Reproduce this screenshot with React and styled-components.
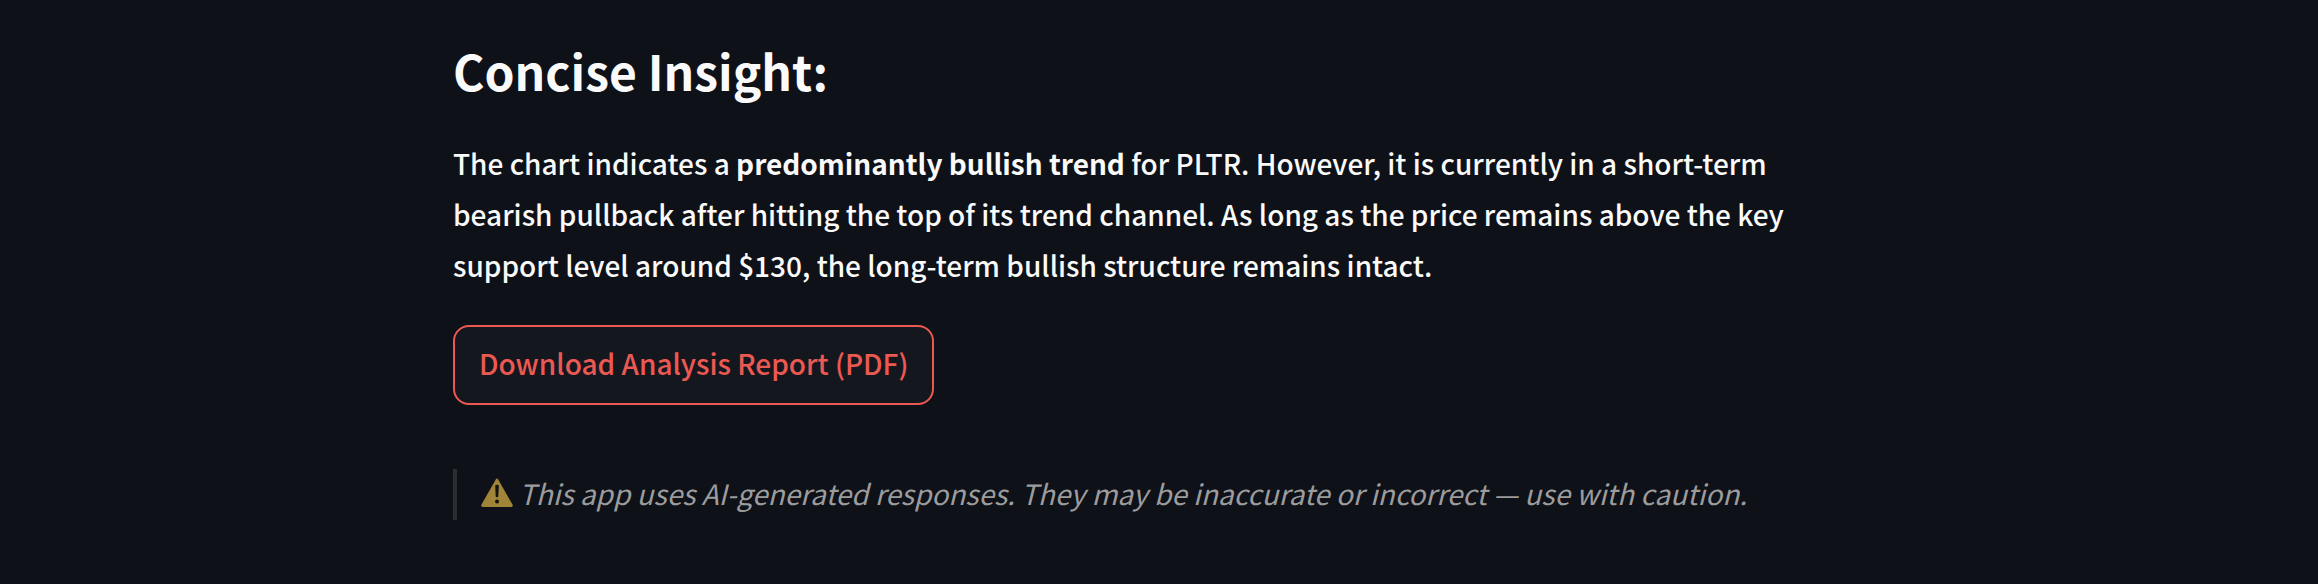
import React from "react";
import styled, { createGlobalStyle } from "styled-components";

const GlobalStyle = createGlobalStyle`
  *, *::before, *::after { box-sizing: border-box; }
  body {
    margin: 0;
    background: #0e1118;
    color: #fafafa;
    font-family: "Noto Sans CJK SC", "Noto Sans", sans-serif;
    font-size: 28px;
    font-weight: 500;
    line-height: 51px;
  }
`;

const Page = styled.main`
  display: flex;
  flex-direction: column;
  align-items: flex-start;
  max-width: 1460px;
  margin: 0 auto;
  padding: 36px 24px 64px;
`;

const Heading = styled.h3`
  margin: 0;
  font-size: 48px;
  line-height: 68px;
  font-weight: 700;
`;

const Paragraph = styled.p`
  margin: 34px 0;
`;

const DownloadButton = styled.button`
  padding: 10px 24px 14px;
  border: 2px solid #ec5952;
  border-radius: 16px;
  background: #15171f;
  color: #ec5952;
  font: inherit;
  line-height: 52px;
  cursor: pointer;
`;

const Notice = styled.blockquote`
  display: flex;
  align-items: center;
  gap: 6px;
  margin: 64px 0 0;
  padding: 0 0 3px 24px;
  border-left: 4px solid #2c2d32;
  color: #9c9c9d;
  font-style: italic;
  font-weight: 400;
  line-height: 48px;
`;

const WarningIcon = styled.svg`
  flex: none;
  width: 32px;
  height: 32px;
`;

export default function App() {
  return (
    <>
      <GlobalStyle />
      <Page>
        <Heading>Concise Insight:</Heading>
        <Paragraph>
          The chart indicates a <strong>predominantly bullish trend</strong> for
          PLTR. However, it is currently in a short-term bearish pullback after
          hitting the top of its trend channel. As long as the price remains
          above the key support level around $130, the long-term bullish
          structure remains intact.
        </Paragraph>
        <DownloadButton type="button">Download Analysis Report (PDF)</DownloadButton>
        <Notice>
          <WarningIcon viewBox="0 0 32 32" role="img" aria-label="Warning">
            <path
              d="M14.8 2.4Q16 0.8 17.2 2.4L31.5 27.6Q32.3 30 30 30H2Q-0.3 30 0.5 27.6Z"
              fill="#a08538"
            />
            <path
              d="M14.2 8.8Q14.2 7.8 16 7.8T17.8 8.8L17.3 19.2Q17.2 20.2 16 20.2T14.7 19.2Z"
              fill="#12130f"
            />
            <circle cx="16" cy="24.6" r="2" fill="#12130f" />
          </WarningIcon>
          <span>
            This app uses AI-generated responses. They may be inaccurate or
            incorrect — use with caution.
          </span>
        </Notice>
      </Page>
    </>
  );
}
